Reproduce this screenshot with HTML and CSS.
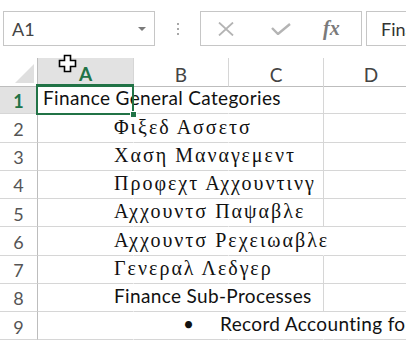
FILE: index.html
```html
<!DOCTYPE html>
<html lang="en">
<head>
    <meta charset="UTF-8">
    <title>Finance Categories - Sheet</title>
    <link rel="stylesheet" href="styles.css">
</head>
<body>
<div class="toolbar">
    <div class="namebox">
        <span>A1</span>
        <span class="caret"></span>
    </div>
    <div class="grip"><i></i><i></i><i></i></div>
    <div class="fxbox">
        <svg class="ico" width="16" height="14" viewBox="0 0 16 14">
            <path d="M1 0.5 L15 13.5 M15 0.5 L1 13.5" stroke="#b4b4b4" stroke-width="1.8" fill="none"/>
        </svg>
        <svg class="ico" width="20" height="12" viewBox="0 0 20 12">
            <path d="M1 5 L7 11 L19 1" stroke="#b4b4b4" stroke-width="2.4" fill="none"/>
        </svg>
        <span class="fx">fx</span>
    </div>
    <div class="formula">Finance General Categories</div>
</div>

<div class="sheet">
    <!-- column headers -->
    <div class="row head">
        <div class="rh corner"><span class="tri"></span></div>
        <div class="ch sel">A</div>
        <div class="ch">B</div>
        <div class="ch">C</div>
        <div class="ch">D</div>
    </div>

    <div class="row">
        <div class="rh sel">1</div>
        <div class="c active open"><span class="txt">Finance General Categories</span>
            <div class="selbox"><span class="handle"></span></div>
        </div>
        <div class="c open"></div>
        <div class="c"></div>
        <div class="c"></div>
    </div>
    <div class="row">
        <div class="rh">2</div>
        <div class="c open"><span class="txt indent greek">Φιξεδ Ασσετσ</span></div>
        <div class="c open"></div>
        <div class="c"></div>
        <div class="c"></div>
    </div>
    <div class="row">
        <div class="rh">3</div>
        <div class="c open"><span class="txt indent greek">Χαση Μαναγεμεντ</span></div>
        <div class="c open"></div>
        <div class="c"></div>
        <div class="c"></div>
    </div>
    <div class="row">
        <div class="rh">4</div>
        <div class="c open"><span class="txt indent greek">Προφεχτ Αχχουντινγ</span></div>
        <div class="c open"></div>
        <div class="c"></div>
        <div class="c"></div>
    </div>
    <div class="row">
        <div class="rh">5</div>
        <div class="c open"><span class="txt indent greek">Αχχουντσ Παψαβλε</span></div>
        <div class="c open"></div>
        <div class="c"></div>
        <div class="c"></div>
    </div>
    <div class="row">
        <div class="rh">6</div>
        <div class="c open"><span class="txt indent greek">Αχχουντσ Ρεχειωαβλε</span></div>
        <div class="c open"></div>
        <div class="c open"></div>
        <div class="c"></div>
    </div>
    <div class="row">
        <div class="rh">7</div>
        <div class="c open"><span class="txt indent greek">Γενεραλ Λεδγερ</span></div>
        <div class="c open"></div>
        <div class="c"></div>
        <div class="c"></div>
    </div>
    <div class="row">
        <div class="rh">8</div>
        <div class="c open"><span class="txt indent">Finance Sub-Processes</span></div>
        <div class="c open"></div>
        <div class="c"></div>
        <div class="c"></div>
    </div>
    <div class="row">
        <div class="rh">9</div>
        <div class="c open"><span class="txt bullet"><b>•</b>Record Accounting for Fixed Assets</span></div>
        <div class="c open"></div>
        <div class="c open"></div>
        <div class="c"></div>
    </div>
</div>

<!-- cell cursor -->
<svg class="cursor" width="20" height="20" viewBox="0 0 20 20">
    <path d="M6.5 1.5 H12.5 V6.5 H17.5 V12.5 H12.5 V17.5 H6.5 V12.5 H1.5 V6.5 H6.5 Z" fill="#fff" stroke="#000" stroke-width="1.6"/>
</svg>
</body>
</html>
```

FILE: styles.css
```css
body {
    font-family: Lato, "Open Sans", sans-serif;
    background-color: #ffffff;
    margin: 0;
    padding: 0;
    width: 406px;
    height: 343px;
    overflow: hidden;
    position: relative;
}

/* formula bar */
.toolbar {
    display: flex;
    align-items: stretch;
    height: 35px;
    padding-top: 11px;
    padding-left: 3px;
    white-space: nowrap;
}

.toolbar > * {
    flex-shrink: 0;
}

.namebox {
    box-sizing: border-box;
    width: 152px;
    border: 1px solid #c6c6c6;
    display: flex;
    align-items: center;
    justify-content: space-between;
    padding: 0 8px 0 8px;
    font-size: 18px;
    color: #444444;
}

.caret {
    width: 0;
    height: 0;
    border-left: 4px solid transparent;
    border-right: 4px solid transparent;
    border-top: 4px solid #7a7a7a;
}

.grip {
    width: 45px;
    display: flex;
    flex-direction: column;
    align-items: center;
    justify-content: center;
    gap: 3px;
}

.grip i {
    width: 2px;
    height: 2px;
    background-color: #a8a8a8;
}

.fxbox {
    box-sizing: border-box;
    width: 162px;
    border: 1px solid #c6c6c6;
    display: flex;
    align-items: center;
    padding-left: 17px;
    gap: 37px;
}

.fx {
    font-family: "Liberation Serif", serif;
    font-style: italic;
    font-weight: bold;
    font-size: 20px;
    color: #7a7a7a;
    margin-left: -5px;
}

.formula {
    box-sizing: border-box;
    width: 200px;
    margin-left: 4px;
    border: 1px solid #c6c6c6;
    display: flex;
    align-items: center;
    padding-left: 14px;
    font-size: 18px;
    color: #333333;
    overflow: hidden;
}

/* grid */
.sheet {
    margin-top: 12px;
    width: 420px;
}

.row {
    display: grid;
    grid-template-columns: 38px 96px 95px 95px 95px;
    height: 28.25px;
}

.row.head {
    height: 28px;
}

.rh, .ch, .c {
    box-sizing: border-box;
    border-right: 1px solid #d6d6d6;
    border-bottom: 1px solid #d6d6d6;
}

.rh {
    border-right-color: #bdbdbd;
    display: flex;
    align-items: center;
    justify-content: center;
    font-size: 18px;
    color: #555555;
    padding-top: 2px;
}

.rh.sel {
    background-color: #e2e2e2;
    color: #217346;
    font-weight: bold;
}

.head .rh, .head .ch {
    border-bottom-color: #bdbdbd;
}

.corner {
    position: relative;
}

.tri {
    position: absolute;
    right: 3px;
    bottom: 3px;
    width: 0;
    height: 0;
    border-left: 19px solid transparent;
    border-bottom: 19px solid #dfdfdf;
}

.ch {
    display: flex;
    align-items: center;
    justify-content: center;
    font-size: 19px;
    color: #444444;
    padding-top: 4px;
}

.ch.sel {
    background-color: #e2e2e2;
    color: #217346;
    font-weight: bold;
    border-bottom: 2px solid #217346;
}

.c {
    display: flex;
    align-items: flex-end;
    padding: 0 0 5px 5px;
    font-size: 19px;
    letter-spacing: 0.35px;
    color: #111111;
}

.c.open {
    border-right-color: transparent;
}

.c.active {
    position: relative;
}

.txt {
    white-space: nowrap;
    line-height: 20px;
}

.indent {
    margin-left: 71px;
}

.greek {
    font-family: "Liberation Serif", serif;
    font-size: 20px;
    letter-spacing: 2px;
}

.bullet {
    margin-left: 140px;
}

.bullet b {
    font-weight: normal;
    display: inline-block;
    width: 37px;
}

.selbox {
    position: absolute;
    top: -2px;
    left: -2px;
    right: -1px;
    bottom: -2px;
    border: 2px solid #217346;
}

.handle {
    position: absolute;
    right: -5px;
    bottom: -5px;
    width: 5px;
    height: 5px;
    background-color: #217346;
    border: 1px solid #ffffff;
}

.cursor {
    position: absolute;
    left: 58px;
    top: 54px;
}
```
